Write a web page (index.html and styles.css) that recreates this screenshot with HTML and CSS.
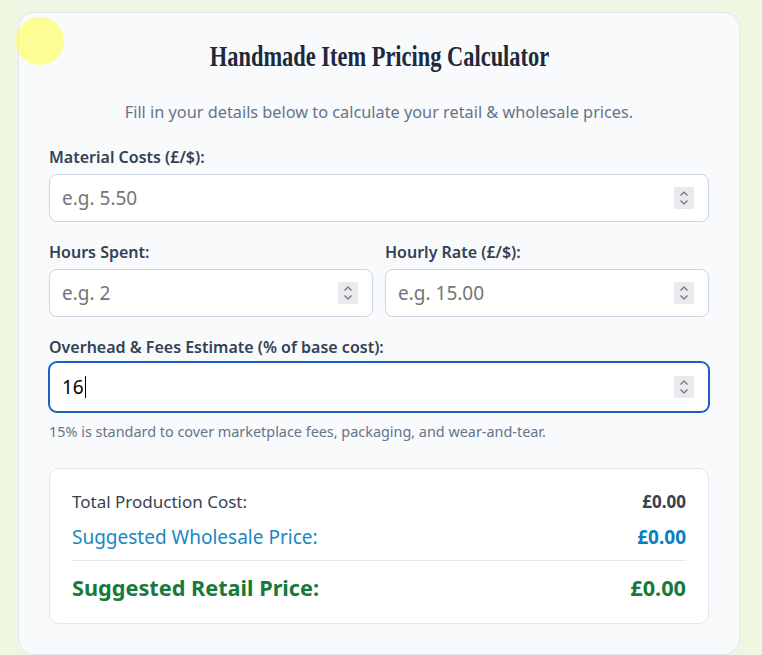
FILE: index.html
```html
<!DOCTYPE html>
<html lang="en">
<head>
<meta charset="utf-8">
<title>Handmade Item Pricing Calculator</title>
<link rel="stylesheet" href="styles.css">
</head>
<body>
<div class="cursor-dot"></div>
<main class="card">
  <h1 class="title"><span class="title-text">Handmade Item Pricing Calculator</span></h1>
  <p class="subtitle">Fill in your details below to calculate your retail &amp; wholesale prices.</p>

  <div class="group">
    <label class="label" for="material">Material Costs (£/$):</label>
    <div class="field">
      <input class="input" id="material" type="number" placeholder="e.g. 5.50">
      <span class="spin"><svg width="20" height="22" viewBox="0 0 20 22"><path d="M6.5 8.5 L10 5 L13.5 8.5 M6.5 13.5 L10 17 L13.5 13.5" fill="none" stroke="#6e6e73" stroke-width="1.2"/></svg></span>
    </div>
  </div>

  <div class="row">
    <div class="group">
      <label class="label" for="hours">Hours Spent:</label>
      <div class="field">
        <input class="input" id="hours" type="number" placeholder="e.g. 2">
        <span class="spin"><svg width="20" height="22" viewBox="0 0 20 22"><path d="M6.5 8.5 L10 5 L13.5 8.5 M6.5 13.5 L10 17 L13.5 13.5" fill="none" stroke="#6e6e73" stroke-width="1.2"/></svg></span>
      </div>
    </div>
    <div class="group">
      <label class="label" for="rate">Hourly Rate (£/$):</label>
      <div class="field">
        <input class="input" id="rate" type="number" placeholder="e.g. 15.00">
        <span class="spin"><svg width="20" height="22" viewBox="0 0 20 22"><path d="M6.5 8.5 L10 5 L13.5 8.5 M6.5 13.5 L10 17 L13.5 13.5" fill="none" stroke="#6e6e73" stroke-width="1.2"/></svg></span>
      </div>
    </div>
  </div>

  <div class="group">
    <label class="label" for="overhead">Overhead &amp; Fees Estimate (% of base cost):</label>
    <div class="field focused">
      <span class="value" id="overhead">16</span><span class="caret"></span>
      <span class="grow"></span>
      <span class="spin"><svg width="20" height="22" viewBox="0 0 20 22"><path d="M6.5 8.5 L10 5 L13.5 8.5 M6.5 13.5 L10 17 L13.5 13.5" fill="none" stroke="#6e6e73" stroke-width="1.2"/></svg></span>
    </div>
    <p class="help">15% is standard to cover marketplace fees, packaging, and wear-and-tear.</p>
  </div>

  <section class="results">
    <div class="res-row total"><span>Total Production Cost:</span><strong>£0.00</strong></div>
    <div class="res-row wholesale"><span>Suggested Wholesale Price:</span><strong>£0.00</strong></div>
    <div class="res-row retail"><span>Suggested Retail Price:</span><span>£0.00</span></div>
  </section>
</main>
</body>
</html>
```
FILE: styles.css
```css
html, body {
  margin: 0;
  padding: 0;
}
body {
  background: #eef7e2;
  font-family: "Noto Sans", "Open Sans", sans-serif;
  color: #334155;
  height: 655px;
  overflow: hidden;
}
.cursor-dot {
  position: absolute;
  left: 16px;
  top: 17px;
  width: 48px;
  height: 48px;
  border-radius: 50%;
  background: rgba(255, 255, 60, 0.55);
  z-index: 10;
}
.card {
  margin: 12px 0 0 18px;
  width: 722px;
  box-sizing: border-box;
  background: #f8fafc;
  border: 1px solid #e2e8f0;
  border-radius: 16px;
  padding: 26px 30px 30px;
}
.title {
  margin: 0;
  text-align: center;
  font-family: "Liberation Serif", "Times New Roman", serif;
  font-weight: bold;
  font-size: 29px;
  line-height: 34px;
  color: #1e293b;
}
.title-text {
  display: inline-block;
  transform: scaleX(0.773);
}
.subtitle {
  margin: 27px 0 22px;
  text-align: center;
  font-size: 16.3px;
  line-height: 24px;
  color: #64748b;
}
.group {
  display: flex;
  flex-direction: column;
  gap: 6px;
  margin-bottom: 19px;
  min-width: 0;
}
.label {
  font-size: 16px;
  line-height: 22px;
  font-weight: 600;
  color: #334155;
}
.row {
  display: grid;
  grid-template-columns: 1fr 1fr;
  gap: 12px;
}
.field {
  display: flex;
  align-items: center;
  height: 48px;
  box-sizing: border-box;
  background: #fff;
  border: 1px solid #cbd5e1;
  border-radius: 8px;
  padding: 0 14px 0 12px;
}
.field.focused {
  border-color: #1b5fc2;
  box-shadow: 0 0 0 1px #1b5fc2;
  margin-top: -2px;
  height: 50px;
}
.input {
  flex: 1;
  min-width: 0;
  border: 0;
  outline: 0;
  background: transparent;
  font-family: inherit;
  font-size: 19px;
  color: #111;
  padding: 0;
  -moz-appearance: textfield;
}
.input::placeholder {
  color: #757575;
}
.input::-webkit-inner-spin-button,
.input::-webkit-outer-spin-button {
  -webkit-appearance: none;
  margin: 0;
}
.value {
  font-size: 19px;
  color: #000;
}
.caret {
  width: 1px;
  height: 22px;
  background: #000;
  margin-left: 1px;
}
.grow {
  flex: 1;
}
.spin {
  display: flex;
  width: 20px;
  height: 22px;
  background: #e9e9ee;
}
.help {
  margin: 4px 0 0;
  font-size: 14.4px;
  line-height: 20px;
  color: #64748b;
}
.results {
  margin-top: 26px;
  background: #fff;
  border: 1px solid #e2e8f0;
  border-radius: 10px;
  padding: 20px 22px 20px;
}
.res-row {
  display: flex;
  justify-content: space-between;
  align-items: baseline;
}
.res-row strong {
  font-weight: 700;
}
.total {
  font-size: 17px;
  line-height: 26px;
  color: #374151;
}
.total strong {
  color: #374151;
}
.wholesale {
  margin-top: 8px;
  font-size: 19px;
  line-height: 28px;
  color: #1a86c2;
  padding-bottom: 9px;
  border-bottom: 1px solid #e5e7eb;
}
.wholesale strong {
  color: #0b7fc0;
}
.retail {
  margin-top: 12px;
  font-size: 21.7px;
  line-height: 30px;
  font-weight: 700;
  color: #177a3b;
}
```
